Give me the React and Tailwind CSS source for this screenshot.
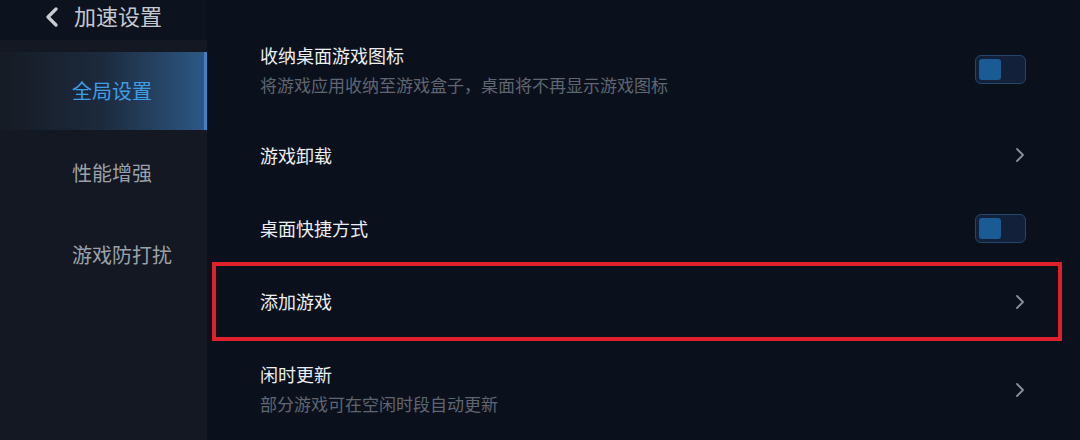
import React from "react";

const Chevron = () => (
  <svg width="12" height="16" viewBox="0 0 12 16" className="shrink-0">
    <path d="M3 2 L9 8 L3 14" fill="none" stroke="#8a9099" strokeWidth="1.8" strokeLinecap="round" strokeLinejoin="round" />
  </svg>
);

const Toggle = () => (
  <div className="w-[51px] h-[29px] rounded-[6px] border border-[#24466c] bg-[#132039] p-[3px] flex">
    <div className="w-[22px] h-full rounded-[3px] bg-[#1a5b94]" />
  </div>
);

const font = { fontFamily: '"Noto Sans CJK SC", "Noto Sans", sans-serif' };

export default function App() {
  return (
    <div className="w-[1080px] h-[440px] bg-[#0b111c] flex overflow-hidden" style={font}>
      {/* Left column */}
      <div className="w-[207px] shrink-0 flex flex-col">
        <div className="h-[40px] bg-[#0d131e] flex items-start pl-[44px] pt-[2px]">
          <svg width="16" height="20" viewBox="0 0 16 20" className="shrink-0 mt-[5px]">
            <path d="M12 2 L4 10 L12 18" fill="none" stroke="#c8ccd2" strokeWidth="3.2" strokeLinecap="round" strokeLinejoin="round" />
          </svg>
          <span className="ml-[14px] text-[22px] leading-[26px] text-[#c5c9cf]">加速设置</span>
        </div>
        <div className="flex-1 bg-[#131823] pt-[12px]">
          <div className="h-[78px] flex items-center pl-[72px] text-[20px] text-[#3f9ee6] bg-gradient-to-r from-[#161b25] via-[#1c2a3d] to-[#2c5885] border-r-[3px] border-[#3b83c6]">
            全局设置
          </div>
          <div className="h-[86px] flex items-center pl-[72px] text-[20px] text-[#9ca1a9]">性能增强</div>
          <div className="h-[78px] flex items-center pl-[72px] text-[20px] text-[#9ca1a9]">游戏防打扰</div>
        </div>
      </div>

      {/* Right column */}
      <div className="flex-1 flex flex-col pt-[24px]">
        <div className="h-[92px] flex items-center pl-[53px] pr-[54px]">
          <div className="flex-1 flex flex-col">
            <div className="text-[18px] leading-[26px] text-[#eceef1]">收纳桌面游戏图标</div>
            <div className="text-[17px] leading-[26px] mt-[4px] text-[#5f6671]">将游戏应用收纳至游戏盒子，桌面将不再显示游戏图标</div>
          </div>
          <div className="-mt-[2px]"><Toggle /></div>
        </div>
        <div className="h-[78px] flex items-center pl-[53px] pr-[54px]">
          <div className="flex-1 text-[18px] text-[#eceef1]">游戏卸载</div>
          <Chevron />
        </div>
        <div className="h-[68px] flex items-center pl-[53px] pr-[54px]">
          <div className="flex-1 text-[18px] text-[#eceef1]">桌面快捷方式</div>
          <Toggle />
        </div>
        <div className="h-[79px] ml-[5px] mr-[18px] border-4 border-[#e0202a] flex items-center pl-[44px] pr-[32px]">
          <div className="flex-1 text-[18px] text-[#eceef1]">添加游戏</div>
          <Chevron />
        </div>
        <div className="flex-1 flex items-center pl-[53px] pr-[54px] pb-[4px]">
          <div className="flex-1 flex flex-col">
            <div className="text-[18px] leading-[26px] text-[#eceef1]">闲时更新</div>
            <div className="text-[17px] leading-[26px] mt-[4px] text-[#5f6671]">部分游戏可在空闲时段自动更新</div>
          </div>
          <div className="mt-[2px]"><Chevron /></div>
        </div>
      </div>
    </div>
  );
}
